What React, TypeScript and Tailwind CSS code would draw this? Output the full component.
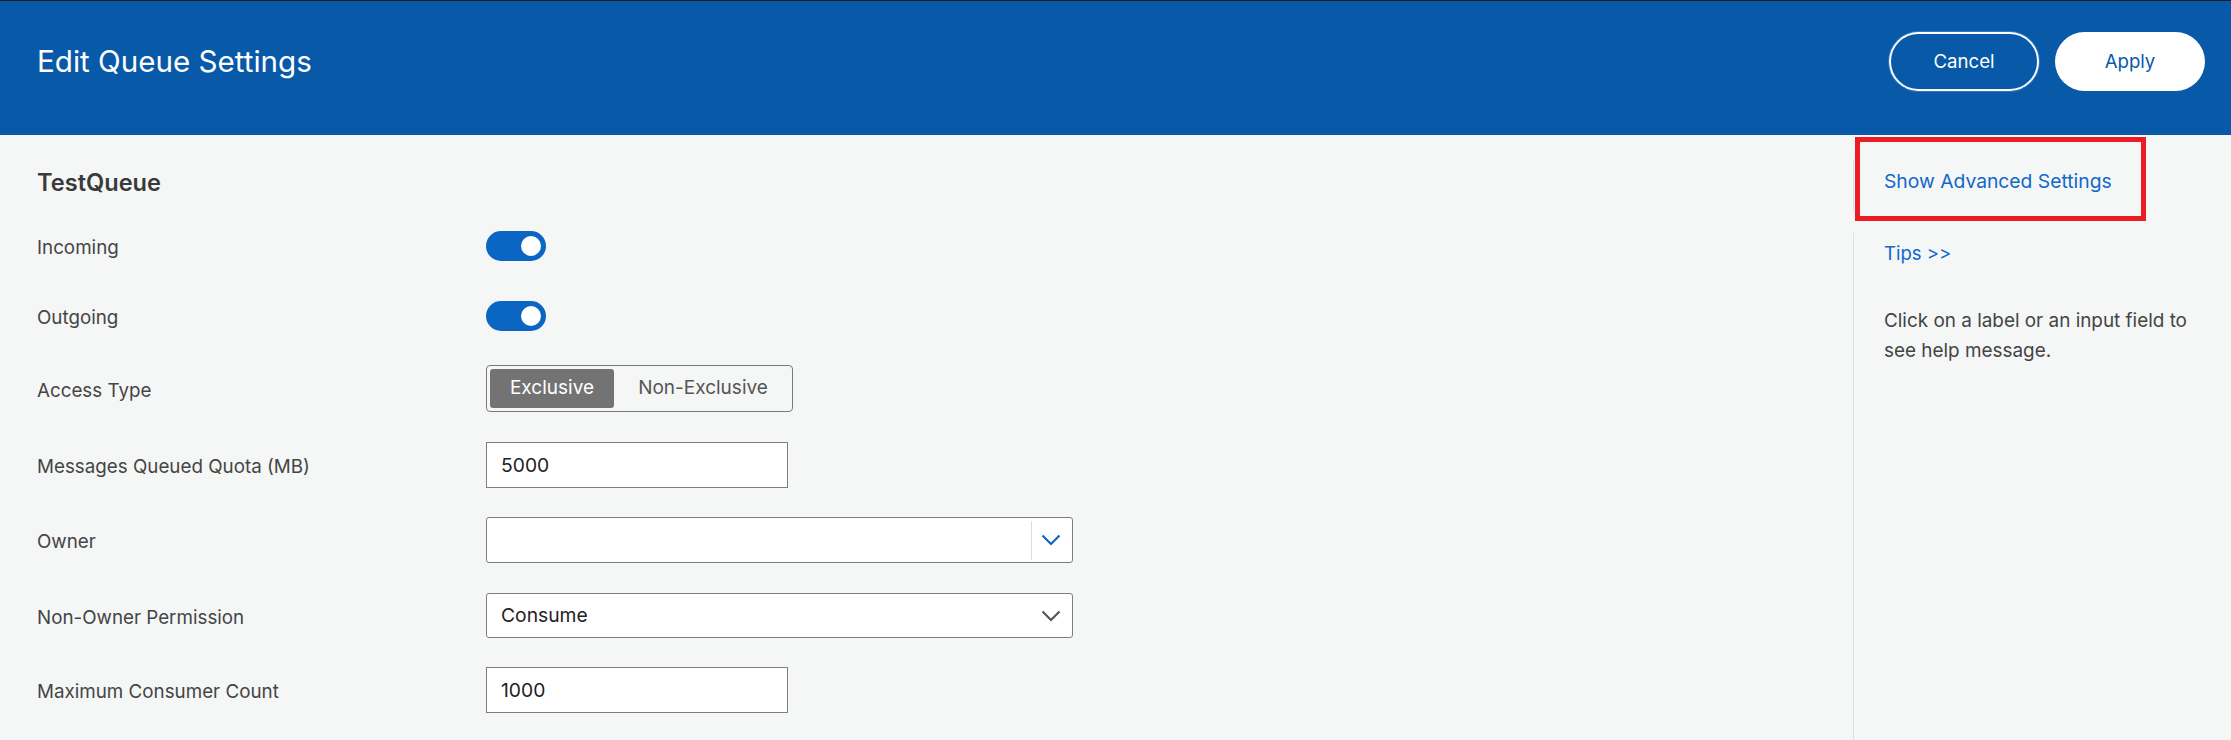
import React from "react";

const font = { fontFamily: "Inter, Roboto, 'Liberation Sans', sans-serif" };

function Toggle() {
  return (
    <div className="relative h-[30px] w-[60px] rounded-full bg-[#0a66c2]">
      <div className="absolute right-[5px] top-[5px] h-[20px] w-[20px] rounded-full bg-white" />
    </div>
  );
}

function Chevron({ color }: { color: string }) {
  return (
    <svg width="20" height="12" viewBox="0 0 20 12" fill="none">
      <path d="M1.5 1.5 L10 10 L18.5 1.5" stroke={color} strokeWidth="2.2" />
    </svg>
  );
}

function Row({
  label,
  children,
  h,
  mt,
}: {
  label: string;
  children: React.ReactNode;
  h: string;
  mt: string;
}) {
  return (
    <div className={`flex items-center ${h} ${mt}`}>
      <div className="w-[449px] shrink-0 pt-[5px] text-[18.8px] text-[#454545]">{label}</div>
      {children}
    </div>
  );
}

export default function App() {
  return (
    <div style={font} className="flex h-[740px] w-[2231px] flex-col overflow-hidden bg-[#f5f6f6]">
      <header className="flex h-[135px] shrink-0 items-start justify-between border-t border-[#1c1c1c] bg-[#0859a8] pl-[37px] pr-[26px] pt-[31px]">
        <h1 className="flex h-[59px] items-center text-[29.6px] font-normal text-white">Edit Queue Settings</h1>
        <div className="flex gap-[16px]">
          <button className="flex h-[59px] w-[150px] items-center justify-center rounded-full border-2 border-white text-[18.6px] text-white shadow-[0_0_0_1px_#2a78c8]">
            Cancel
          </button>
          <button className="flex h-[59px] w-[150px] items-center justify-center rounded-full bg-white text-[18.6px] text-[#0859a8]">
            Apply
          </button>
        </div>
      </header>
      <div className="flex flex-1">
        <main className="flex-1 pl-[37px]">
          <div className="mt-[33px] flex h-[30px] items-center text-[23.6px] font-semibold text-[#3a3a3a]">TestQueue</div>
          <Row label="Incoming" h="h-[40px]" mt="mt-[28px]">
            <Toggle />
          </Row>
          <Row label="Outgoing" h="h-[40px]" mt="mt-[30px]">
            <Toggle />
          </Row>
          <Row label="Access Type" h="h-[47px]" mt="mt-[29px]">
            <div className="flex h-[47px] w-[307px] items-center gap-0 rounded-[4px] border border-[#7a7a7a] p-[3px]">
              <div className="flex h-[39px] w-[124px] items-center justify-center rounded-[3px] bg-[#737373] text-[19px] text-white">
                Exclusive
              </div>
              <div className="flex h-[39px] flex-1 items-center justify-center pl-[3px] text-[19px] text-[#555]">Non-Exclusive</div>
            </div>
          </Row>
          <Row label="Messages Queued Quota (MB)" h="h-[46px]" mt="mt-[30px]">
            <div className="flex h-[46px] w-[302px] items-center border border-[#7d7d7d] bg-white pl-[14px] text-[19.3px] text-[#222]">
              5000
            </div>
          </Row>
          <Row label="Owner" h="h-[46px]" mt="mt-[29px]">
            <div className="flex h-[46px] w-[587px] items-center rounded-[3px] border border-[#7d7d7d] bg-white">
              <div className="flex-1" />
              <div className="h-[39px] w-px bg-[#dcdcdc]" />
              <div className="flex w-[40px] items-center justify-center pr-[2px]">
                <Chevron color="#0a66c2" />
              </div>
            </div>
          </Row>
          <Row label="Non-Owner Permission" h="h-[45px]" mt="mt-[30px]">
            <div className="flex h-[45px] w-[587px] items-center justify-between rounded-[3px] border border-[#7d7d7d] bg-white pl-[14px] pr-[11px] text-[19.3px] text-[#222]">
              <span>Consume</span>
              <Chevron color="#555555" />
            </div>
          </Row>
          <Row label="Maximum Consumer Count" h="h-[46px]" mt="mt-[29px]">
            <div className="flex h-[46px] w-[302px] items-center border border-[#7d7d7d] bg-white pl-[14px] text-[19.3px] text-[#222]">
              1000
            </div>
          </Row>
        </main>
        <aside className="relative w-[378px] shrink-0">
          <div className="mt-[24px] h-[52px] border-l border-[#dedede] pl-[30px] pt-[8px] text-[19.3px] leading-[28px] text-[#1068c8]">
            Show Advanced Settings
          </div>
          <div className="mt-[22px] h-[600px] border-l border-[#dedede] pl-[30px] pt-[6px]">
            <div className="text-[18.5px] leading-[28px] text-[#1068c8]">Tips &gt;&gt;</div>
            <p className="mt-[39px] w-[320px] text-[18.9px] leading-[30px] text-[#444]">
              Click on a label or an input field to see help message.
            </p>
          </div>
          <div className="pointer-events-none absolute left-[2px] top-[2px] h-[84px] w-[291px] border-[5px] border-[#ec1c24]" />
        </aside>
      </div>
    </div>
  );
}
